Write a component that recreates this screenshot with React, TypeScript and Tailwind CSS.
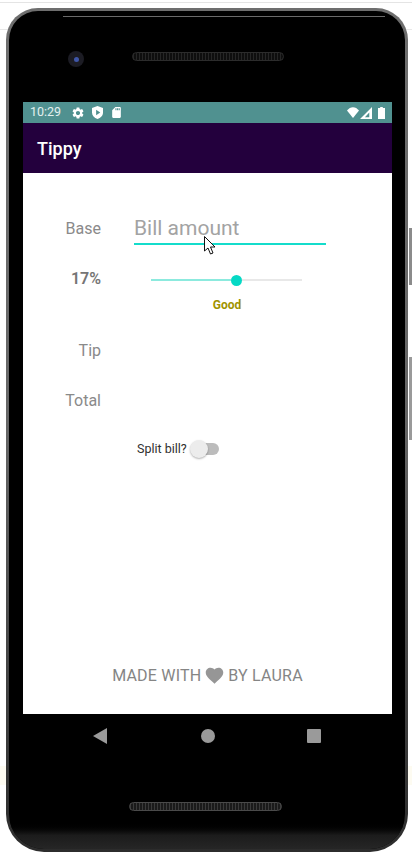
import { MdFavorite, MdSdCard, MdSettings } from 'react-icons/md'

function StatusBar() {
  return (
    <div className="flex h-[21px] items-center bg-[#509190] pl-[7px] pr-[7px] text-[#e3f0ef]">
      <span className="w-[31px] text-[12.5px] leading-none">10:29</span>
      <MdSettings className="ml-[10px] text-[14px] text-white" />
      <svg viewBox="0 0 12 14" className="ml-[7px] h-[13px] w-[11px]">
        <path d="M6 0 L12 2 V7 C12 10.5 9.5 13 6 14 C2.500 13 0 10.500 0 7 V2 Z M4.500 4 V10 L9 7 Z" fill="#fff" fillRule="evenodd" />
      </svg>
      <MdSdCard className="ml-[7px] text-[13px] text-white" />
      <svg viewBox="0 0 14 11" className="ml-auto h-[11px] w-[12px]" preserveAspectRatio="none">
        <path d="M0 3.500 C4 -1 10 -1 14 3.500 L7 11 Z" fill="#fff" />
      </svg>
      <svg viewBox="0 0 11 11" className="ml-[1px] h-[12px] w-[12px]">
        <path d="M11 0 V11 H0 Z M8.500 5 L4.500 9.500 H8.500 Z" fill="#fff" fillRule="evenodd" />
      </svg>
      <svg viewBox="0 0 8 12" className="ml-[6px] h-[12px] w-[7px]" preserveAspectRatio="none">
        <path d="M2.500 0 H5.500 V1 H8 V12 H0 V1 H2.500 Z" fill="#fff" />
      </svg>
    </div>
  )
}

function Label({ text, bold }: { text: string; bold?: boolean }) {
  return (
    <div className={`w-[78px] text-right text-[16px] leading-[20px] ${bold ? 'font-semibold text-[#757575]' : 'text-[#8a8a8a]'}`}>
      {text}
    </div>
  )
}

function Content() {
  return (
    <div className="flex h-[541px] flex-col bg-white">
      <div className="mt-[42px] flex">
        <div className="flex h-[28px] items-center">
          <Label text="Base" />
        </div>
        <div className="ml-[33px] w-[192px] border-b-2 border-[#14dccb] pb-[2px] text-[21px] leading-[26px] text-[#a3a3a3]">
          Bill amount
        </div>
      </div>

      <div className="mt-[24px] flex">
        <Label text="17%" bold />
        <div className="ml-[50px] w-[151px]">
          <div className="mt-[1px] flex h-[20px] items-center">
            <div className="h-[2px] w-[80px] bg-[#8ceade]" />
            <div className="h-[11px] w-[11px] rounded-full bg-[#05d9c5]" />
            <div className="h-[2px] flex-1 bg-[#e8e8e8]" />
          </div>
          <div className="mt-[7px] pl-[1px] text-center text-[12px] leading-[16px] font-bold text-[#a09300]">Good</div>
        </div>
      </div>

      <div className="mt-[28px]">
        <Label text="Tip" />
      </div>
      <div className="mt-[30px]">
        <Label text="Total" />
      </div>

      <div className="mt-[29px] flex h-[18px] items-center pl-[114px]">
        <span className="text-[12.5px] leading-none text-[#303030]">Split bill?</span>
        <div className="relative ml-[3px] h-[18px] w-[29px]">
          <div className="absolute top-[3px] right-0 h-[12px] w-[24px] rounded-full bg-[#bcbcbc]" />
          <div className="absolute top-0 left-0 h-[18px] w-[18px] rounded-full bg-[#ececec] shadow-[0_1px_2px_rgba(0,0,0,0.3)]" />
        </div>
      </div>

      <div className="mt-auto mb-[28px] flex items-center justify-center text-[16px] leading-[20px] tracking-[0.2px] text-[#858585]">
        <span>MADE WITH</span>
        <MdFavorite className="mx-[3px] text-[21px] text-[#969696]" />
        <span>BY LAURA</span>
      </div>
    </div>
  )
}

export default function App() {
  return (
    <div className="relative h-[859px] w-[412px] overflow-hidden bg-white [font-family:Roboto,sans-serif]">
      {/* window bits behind the emulator */}
      <div className="absolute top-[2px] left-0 h-[1px] w-full bg-[#e4e4e4]" />
      <div className="absolute top-[29px] left-0 h-[1px] w-full bg-[#e8e8e8]" />
      <div className="absolute top-[766px] left-0 h-[19px] w-full bg-[#fdfbf1]" />
      {/* volume and power keys */}
      <div className="absolute top-[228px] right-0 h-[57px] w-[3px] bg-[#8b8b8b]" />
      <div className="absolute top-[357px] right-0 h-[83px] w-[3px] bg-[#9a9a9a]" />

      <div className="relative ml-[6px] mt-[8px] h-[844px] w-[402px] rounded-t-[32px] rounded-b-[38px] bg-gradient-to-b from-[#6e6e6e] via-[#666666] to-[#2c2c2c] p-[3px]">
        <div className="flex h-[838px] flex-col overflow-hidden rounded-t-[29px] rounded-b-[35px] bg-black">
          <div className="relative flex h-[91px] shrink-0 items-start pl-[14px]">
            <div className="absolute top-[5px] left-[54px] h-[1px] w-[322px] bg-[#6a6a6a]" />
            <div className="mt-[40px] ml-[45px] flex h-[16px] w-[16px] items-center justify-center rounded-full bg-[#1c1c24]">
              <div className="h-[5px] w-[5px] rounded-full bg-[#3f56a8]" />
            </div>
            <div className="mt-[41px] ml-[48px] h-[9px] w-[152px] rounded-full border border-[#2c2c2c] bg-[repeating-linear-gradient(90deg,#262626_0,#262626_1px,#0e0e0e_1px,#0e0e0e_3px)]" />
          </div>

          <div className="pr-[13px] pl-[14px]">
            <StatusBar />
            <div className="flex h-[50px] items-center bg-[#23003d] pl-[14px] text-[18px] font-medium text-white">Tippy</div>
            <Content />

            <div className="flex h-[44px] items-center pl-[70px]">
              <svg viewBox="0 0 14 16" className="h-[16px] w-[14px]">
                <path d="M14 0 V16 L0 8 Z" fill="#9a9a9a" />
              </svg>
              <div className="ml-[94px] h-[14px] w-[14px] rounded-full bg-[#9a9a9a]" />
              <div className="ml-[92px] h-[14px] w-[14px] rounded-[1px] bg-[#9a9a9a]" />
            </div>
            <div className="mt-[44px] ml-[106px] h-[9px] w-[153px] rounded-full border border-[#4a4a4a] bg-[repeating-linear-gradient(90deg,#3a3a3a_0,#3a3a3a_1px,#1a1a1a_1px,#1a1a1a_3px)]" />
          </div>

          {/* chin shading */}
          <div className="mt-[11px] flex-1 bg-gradient-to-b from-[#000000] via-[#1c1c1c] to-[#262626]" />
        </div>
      </div>

      {/* mouse pointer caught in the recording */}
      <svg viewBox="0 0 12 20" className="absolute top-[236px] left-[204px] h-[20px] w-[12px]">
        <path d="M0.500 0.500 V15 L4 12 L6.500 18 L9 17 L6.500 11 L11 11 Z" fill="#fff" stroke="#111" strokeWidth="1" />
      </svg>
    </div>
  )
}
